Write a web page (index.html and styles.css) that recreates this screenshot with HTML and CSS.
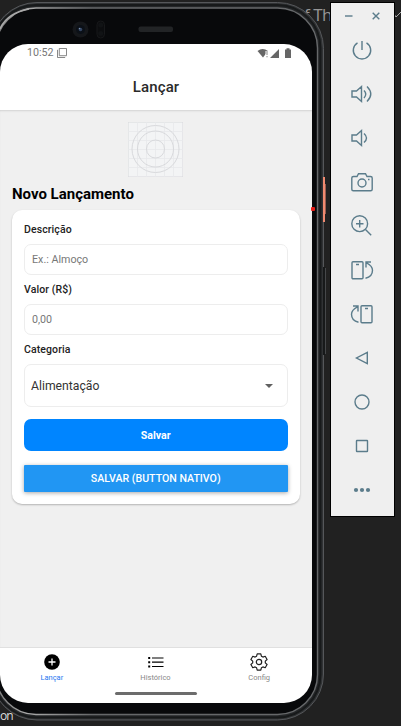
FILE: index.html
```html
<!DOCTYPE html>
<html lang="pt-BR">
<head>
<meta charset="utf-8">
<title>Lançar</title>
<link rel="stylesheet" href="styles.css">
</head>
<body>
<div class="desk-text desk-top">f Th</div>
<svg class="desk-chevron" viewBox="0 0 8 8"><path d="M0 2l2 3 5-5"/></svg>
<svg class="phone-frame" viewBox="0 0 330 726">
  <defs>
    <linearGradient id="rim" x1="0" x2="1" y1="0" y2="0">
      <stop offset="0" stop-color="#777"/><stop offset=".1" stop-color="#aaa"/><stop offset=".3" stop-color="#66686a"/><stop offset="1" stop-color="#66686a"/>
    </linearGradient>
  </defs>
  <rect x="-9" y="2.500" width="332.500" height="717.500" rx="46" fill="#303234" stroke="#55575a"/>
  <rect x="-7" y="5" width="327.500" height="712.500" rx="43" fill="#242628" stroke="#17191a" stroke-width="2"/>
  <rect x="-4" y="8" width="321.500" height="706.500" rx="40" fill="#08090b" stroke="url(#rim)" stroke-width="1.400"/>
  <path d="M0 29Q7 13 29 9" fill="none" stroke="#aaa" stroke-width="1.600"/>
  <circle cx="80.500" cy="29.500" r="8" fill="#15171a"/><circle cx="80.500" cy="29.500" r="4.500" fill="#0b1017"/><circle cx="80.500" cy="29.500" r="1.800" fill="#344561"/><circle cx="79.500" cy="28.500" r=".8" fill="#7b91b4"/>
  <rect x="97" y="21" width="7.500" height="17" rx="3.700" fill="#0c0d0f" stroke="#17181a"/><circle cx="100.700" cy="25" r="2.500" fill="#111315"/><circle cx="100.700" cy="33.500" r="2.500" fill="#111315"/>
  <rect x="138.500" y="26.500" width="34.500" height="5.500" rx="2" fill="#222426"/>
  <path d="M324 177v45" stroke="#f08a70" stroke-width="2"/><path d="M325.500 184v30" stroke="#9a5c50"/>
  <path d="M324 267v88" stroke="#17191a" stroke-width="2"/><path d="M325.500 268v86" stroke="#46484a"/>
</svg>
<div class="desk-text desk-bottom">on</div>
<main class="screen">
  <div class="status">
    <span>10:52</span>
    <svg class="copy-icon" viewBox="0 0 11 11"><path d="M2.500.5h8v8h-8zM.5 2v8.500H9"/></svg>
    <svg class="signals" viewBox="0 0 35 11"><path d="M.5 3Q5.500-1 11 3L6 9.500z"/><path class="gap" d="M10 3v7"/><path class="bang" d="M10 3v4M10 8v1.300"/><path d="M13 10h9V1zM28 1.500h1.500V.3h3v1.200H34V10h-6z"/></svg>
  </div>
  <header class="header">Lançar</header>
  <section class="content">
    <svg class="logo" viewBox="0 0 55 55"><rect width="55" height="55" fill="#f3f4f5"/><path class="grid" d="M9.500 0v55M18.500 0v55M27.500 0v55M36.500 0v55M45.500 0v55M0 9.500h55M0 18.500h55M0 27.500h55M0 36.500h55M0 45.500h55"/><circle cx="27.500" cy="27" r="23.500"/><circle cx="27.500" cy="27" r="18"/><circle cx="27.500" cy="27" r="9"/></svg>
    <h1>Novo Lançamento</h1>
    <form class="card">
      <label>Descrição</label>
      <div class="field">Ex.: Almoço</div>
      <label>Valor (R$)</label>
      <div class="field">0,00</div>
      <label>Categoria</label>
      <div class="select"><span>Alimentação</span><i></i></div>
      <button class="primary" type="button">Salvar</button>
      <button class="native" type="button">SALVAR (BUTTON NATIVO)</button>
    </form>
  </section>
  <nav class="tabs">
    <div class="tab active"><svg viewBox="0 0 18 18"><circle cx="9" cy="9" r="7.800" fill="#000"/><path d="M5.500 9h7M9 5.500v7" stroke="#fff" stroke-width="1.300"/></svg><span>Lançar</span></div>
    <div class="tab"><svg viewBox="0 0 18 18" fill="none" stroke="#000" stroke-width="1.200"><path d="M5 5h11.500M5 9.200h11.500M5 13.500h11.500"/><path d="M1.200 5h2M1.200 9.200h2M1.200 13.500h2" stroke-width="1.900"/></svg><span>Histórico</span></div>
    <div class="tab"><svg viewBox="0 0 18 18" fill="none" stroke="#222" stroke-width="1.200" stroke-linejoin="round"><path d="M7.200.9h3.600l.6 2.300 1.500.9 2.300-.8 1.900 3.200-1.800 1.600v1.800l1.800 1.600-1.900 3.200-2.300-.8-1.500.9-.6 2.300H7.200l-.6-2.300-1.500-.9-2.300.8-1.900-3.200 1.800-1.600V8.100L.9 6.500l1.900-3.200 2.300.8 1.500-.9z"/><circle cx="9" cy="9" r="2.700"/></svg><span>Config</span></div>
  </nav>
  <div class="home-bar"></div>
</main>
<i class="red-dot"></i>
<aside class="toolbar">
  <div class="window-buttons"><svg viewBox="0 0 10 10"><path d="M1 5h7.500"/></svg><svg viewBox="0 0 10 10"><path d="M1.700 1.700l6.600 6.600M8.300 1.700L1.700 8.300"/></svg></div>
  <svg viewBox="0 0 24 24"><path d="M12 3v9M7.500 4.800a8.700 8.700 0 1 0 9 0"/></svg>
  <svg viewBox="0 0 24 24"><path d="M2 9h4.500L11.500 4.500v15L6.500 15H2zM14 8.500q3.500 3.500 0 7.500M17 4.500q7.500 7.500 0 15"/></svg>
  <svg viewBox="0 0 24 24"><path d="M2 9h4.500L11.500 4.500v15L6.500 15H2zM14 7.500q5 4.500 0 9"/></svg>
  <svg viewBox="0 0 24 24"><path d="M3.500 6.500H7L8.500 3.700h7L17 6.500h3.500q1.700 0 1.700 1.500v11.200q0 1.500-1.500 1.500H3.300q-1.500 0-1.500-1.500V8q0-1.500 1.700-1.500z"/><circle cx="12" cy="13" r="4"/><path d="M18 9.500h1.500"/></svg>
  <svg viewBox="0 0 24 24"><circle cx="9.700" cy="9.700" r="7.900"/><path d="M9.700 6v7.500M6 9.700h7.500M15.500 15.500l5.700 5.700"/></svg>
  <svg viewBox="0 0 24 24"><rect x="2" y="3.700" width="11" height="17" rx="1"/><path d="M6 6.500h3M15.500 20.300q7-1.500 7-8 0-4.500-6-7.500M21 4h-5v5.500"/></svg>
  <svg viewBox="0 0 24 24"><rect x="11" y="3.700" width="11" height="17" rx="1"/><path d="M15 6.500h3M8.500 20.300q-7-1.500-7-8 0-4.500 6-7.500M3 4h5v5.500"/></svg>
  <svg viewBox="0 0 24 24"><path d="M17.300 6.400v11.200L6.500 12z"/></svg>
  <svg viewBox="0 0 24 24"><circle cx="12" cy="12" r="7"/></svg>
  <svg viewBox="0 0 24 24"><rect x="6.500" y="6.500" width="11" height="11" rx=".5"/></svg>
  <svg class="dots" viewBox="0 0 24 24"><circle cx="6" cy="12" r="2.100"/><circle cx="12" cy="12" r="2.100"/><circle cx="18" cy="12" r="2.100"/></svg>
</aside>
</body>
</html>
```
FILE: styles.css
```css
* { box-sizing: border-box; }
body {
  position: relative;
  width: 401px;
  height: 726px;
  margin: 0;
  overflow: hidden;
  background: #212121;
  font-family: Roboto, sans-serif;
}
svg { display: block; flex: none; }
.desk-text { position: absolute; }
.desk-top { left: 304px; top: 5px; font: 17px/20px "Open Sans", sans-serif; letter-spacing: -.5px; color: #969696; white-space: nowrap; }
.desk-chevron { position: absolute; left: 394px; top: 12px; width: 8px; height: 8px; fill: none; stroke: #aaa; }
.desk-bottom { left: 0; top: 706px; font: 12px/20px "Open Sans", sans-serif; letter-spacing: -1px; color: #ddd; }
.phone-frame { position: absolute; left: 0; top: 0; width: 330px; height: 726px; }
.screen {
  position: absolute;
  left: 0;
  top: 44px;
  width: 312px;
  height: 659px;
  display: flex;
  flex-direction: column;
  overflow: hidden;
  border-radius: 28px;
  background: #fff;
}
.status { height: 18px; padding: 0 20px 0 27px; display: flex; align-items: center; gap: 3px; color: #777; font-size: 10.700px; line-height: 18px; }
.copy-icon { width: 10px; height: 10px; fill: none; stroke: #777; }
.signals { width: 35px; height: 11px; margin-left: auto; fill: #666; }
.signals .gap { stroke: #fff; stroke-width: 3; }
.signals .bang { stroke: #888; }
.header { height: 48px; flex: none; display: flex; align-items: center; justify-content: center; padding-top: 1px; font-size: 15px; font-weight: 500; letter-spacing: .15px; color: #2a2a2a; }
.content { flex: 1; padding: 12px 12px 0; background: #f0f0f0; box-shadow: inset 0 2px 2px -1px #d2d2d2; }
.logo { width: 55px; height: 55px; margin: 0 auto; position: relative; left: -1px; fill: none; stroke: #d8d9dc; }
.logo .grid { stroke: #e7e8eb; stroke-width: .8; }
h1 { margin: 7px 0 5.500px; font-size: 15px; line-height: 20px; font-weight: 700; color: #000; }
.card { width: 287.500px; height: 294px; padding: 12px 12px 0; border-radius: 10px; background: #fff; box-shadow: 0 1px 2px rgba(0,0,0,.25); }
label { display: block; height: 15px; margin-bottom: 7px; color: #222; font-size: 10.500px; line-height: 16px; font-weight: 500; letter-spacing: .1px; }
.field, .select { width: 263.500px; height: 31.300px; margin-bottom: 7px; padding: 0 7px; display: flex; align-items: center; border: 1px solid #ededed; border-radius: 7px; font-size: 10.700px; color: #777; }
.select { height: 43px; margin-bottom: 12px; padding: 0 14px 0 6px; justify-content: space-between; font-size: 12.200px; color: #333; }
.select i { border: 4px solid transparent; border-top-color: #606060; border-bottom: 0; }
button { display: block; width: 263.500px; padding: 0; border: 0; color: #fff; font-family: Roboto, sans-serif; }
.primary { height: 32px; border-radius: 7px; background: #0085ff; font-size: 10.600px; font-weight: 700; }
.native { height: 27px; margin-top: 14px; border-radius: 1px; background: #2196f3; box-shadow: 0 1px 4px rgba(0,0,0,.35); font-size: 10.600px; font-weight: 500; }
.tabs { height: 40px; flex: none; padding-right: 1px; display: flex; border-top: 1px solid #e0e0e0; }
.tab { flex: 1; padding-top: 5px; display: flex; flex-direction: column; align-items: center; gap: 2px; font-size: 7.500px; line-height: 9px; color: #888; }
.tab svg { width: 18px; height: 18px; }
.active { color: #2578ef; }
.home-bar { width: 82px; height: 3px; flex: none; margin: 5px auto 8px; border-radius: 2px; background: #6c6c6c; }
.red-dot { position: absolute; left: 311px; top: 207px; width: 4px; height: 4px; border-radius: 1px; background: #e51d18; }
.toolbar { position: absolute; left: 330px; top: 2px; width: 65px; height: 515px; padding-right: 1px; display: flex; flex-direction: column; align-items: center; gap: 20px; border: 1px solid #000; background: #efefef; }
.toolbar svg { width: 24px; height: 24px; fill: none; stroke: #5b7c8b; stroke-width: 1.400; }
.window-buttons { height: 15px; width: 100%; flex: none; padding: 8px 12px 0 13px; display: flex; justify-content: space-between; }
.toolbar .window-buttons svg { width: 10px; height: 10px; }
.toolbar .dots { fill: #5b7c8b; stroke: none; }
```
